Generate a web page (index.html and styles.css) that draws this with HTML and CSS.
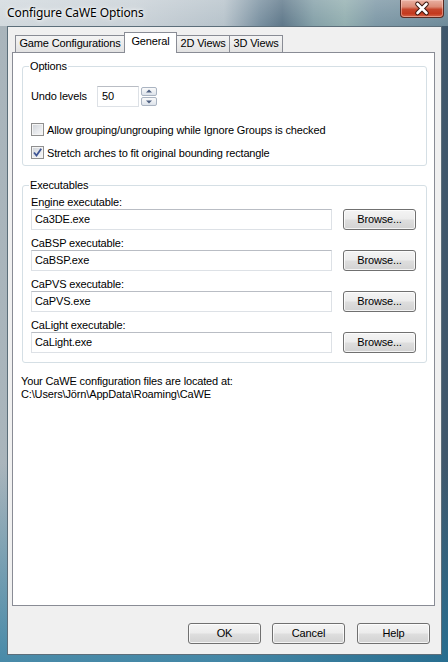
FILE: index.html
```html
<!DOCTYPE html>
<html>
<head>
<meta charset="utf-8">
<link rel="stylesheet" href="styles.css">
</head>
<body>
<div class="window">
  <div class="titlebar">
    <span class="title">Configure CaWE Options</span>
    <div class="close">
      <svg width="42" height="17" viewBox="0 0 42 17">
        <path d="M16.5 4 L25.5 13 M25.5 4 L16.5 13" stroke="#3b1710" stroke-width="4.6" stroke-linecap="round"/>
        <path d="M16.5 4 L25.5 13 M25.5 4 L16.5 13" stroke="#ffffff" stroke-width="2.6" stroke-linecap="round"/>
      </svg>
    </div>
  </div>
  <div class="client">
    <div class="tabs">
      <div class="tab first">Game Configurations</div>
      <div class="tab active">General</div>
      <div class="tab">2D Views</div>
      <div class="tab">3D Views</div>
    </div>
    <div class="panel">
      <fieldset class="group options">
        <legend>Options</legend>
        <div class="undo-row">
          <span class="undo-label">Undo levels</span>
          <div class="edit small">50</div>
          <div class="spin">
            <div class="spin-btn"><svg width="14" height="7" viewBox="0 0 14 7"><path d="M7 1.5 L10 4.5 L4 4.5 Z" fill="#4d5f80"/></svg></div>
            <div class="spin-btn"><svg width="14" height="7" viewBox="0 0 14 7"><path d="M4 2.5 L10 2.5 L7 5.5 Z" fill="#4d5f80"/></svg></div>
          </div>
        </div>
        <div class="check-row first-check">
          <span class="checkbox"></span>
          <span>Allow grouping/ungrouping while Ignore Groups is checked</span>
        </div>
        <div class="check-row">
          <span class="checkbox"><svg width="11" height="11" viewBox="0 0 11 11"><path d="M2 5.5 L4.5 8.5 L9.2 1.8" fill="none" stroke="#3f5594" stroke-width="1.8"/></svg></span>
          <span>Stretch arches to fit original bounding rectangle</span>
        </div>
      </fieldset>
      <fieldset class="group exes">
        <legend>Executables</legend>
        <div class="exe">
          <div class="exe-label">Engine executable:</div>
          <div class="exe-row"><div class="edit wide">Ca3DE.exe</div><div class="btn browse">Browse...</div></div>
        </div>
        <div class="exe">
          <div class="exe-label">CaBSP executable:</div>
          <div class="exe-row"><div class="edit wide">CaBSP.exe</div><div class="btn browse">Browse...</div></div>
        </div>
        <div class="exe">
          <div class="exe-label">CaPVS executable:</div>
          <div class="exe-row"><div class="edit wide">CaPVS.exe</div><div class="btn browse">Browse...</div></div>
        </div>
        <div class="exe">
          <div class="exe-label">CaLight executable:</div>
          <div class="exe-row"><div class="edit wide">CaLight.exe</div><div class="btn browse">Browse...</div></div>
        </div>
      </fieldset>
      <p class="info">Your CaWE configuration files are located at:<br>C:\Users\Jörn\AppData\Roaming\CaWE</p>
    </div>
    <div class="buttons">
      <div class="btn dlg">OK</div>
      <div class="btn dlg cancel">Cancel</div>
      <div class="btn dlg help">Help</div>
    </div>
  </div>
</div>
</body>
</html>
```
FILE: styles.css
```css
* { box-sizing: border-box; }
html, body { margin: 0; padding: 0; }
body {
  width: 448px;
  height: 662px;
  overflow: hidden;
  font-family: "Liberation Sans", Arial, sans-serif;
  font-size: 11px;
  letter-spacing: -0.15px;
  color: #000;
}
.window {
  width: 448px;
  height: 662px;
  display: flex;
  flex-direction: column;
  padding: 0 6px 7px 7px;
  background:
    linear-gradient(180deg, rgba(0,0,0,0) 70%, rgba(30,120,160,0.7) 100%),
    linear-gradient(90deg, #aab5bc 0%, #98a8b3 50%, #3e566a 100%);
}
.titlebar {
  height: 26px;
  margin: 0 -6px 0 -7px;
  padding: 0 4px 0 7px;
  display: flex;
  justify-content: space-between;
  align-items: flex-start;
  background:
    linear-gradient(180deg, rgba(255,255,255,0.18) 0%, rgba(255,255,255,0) 100%),
    linear-gradient(90deg, #d2d9de 0%, #c9d1d7 30%, #b7c3cb 50%, #7990a0 58%, #5f788a 63%, #84a0a8 70%, #93afb0 77%, #7d98a6 84%, #6e8a99 100%);
}
.title {
  font-family: "Noto Sans", "Liberation Sans", sans-serif;
  font-size: 12px;
  letter-spacing: -0.1px;
  line-height: 16px;
  margin-top: 5px;
  color: #000;
  text-shadow: 0 0 6px #fff, 0 0 3px #fff;
}
.close {
  width: 44px;
  height: 18px;
  border: 1px solid #5a2a22;
  border-top: none;
  border-radius: 0 0 4px 4px;
  background: linear-gradient(180deg, #e9b0a2 0%, #dc8b76 40%, #c6462c 55%, #c4391e 80%, #d5664a 100%);
  box-shadow: inset 0 0 0 1px rgba(255,220,210,0.45);
  display: flex;
  align-items: center;
  justify-content: center;
}
.close svg { display: block; }
.client {
  flex: 1;
  display: flex;
  flex-direction: column;
  background: #f0f0f0;
  border: 1px solid #5c6e7a;
  padding: 5px 6px 10px 4px;
}
.tabs {
  height: 20px;
  display: flex;
  align-items: flex-end;
  padding-left: 3px;
  position: relative;
  z-index: 2;
}
.tab {
  height: 17px;
  border: 1px solid #898c95;
  border-bottom: none;
  background: linear-gradient(180deg, #f4f4f4 0%, #ececec 50%, #e2e2e2 100%);
  display: flex;
  align-items: center;
  justify-content: center;
  line-height: 13px;
  padding-bottom: 1px;
  margin-left: -1px;
  width: 54px;
}
.tab.first { margin-left: 0; width: 110px; }
.tab.active {
  height: 21px;
  margin-bottom: -1px;
  width: 53px;
  background: #fff;
  padding-bottom: 3px;
  position: relative;
  z-index: 3;
}
.panel {
  height: 554px;
  background: #fff;
  border: 1px solid #898c95;
  padding: 7px 7px 0 8px;
}
.group {
  margin: 0 0 0 1px;
  border: 1px solid #d5dfe5;
  border-radius: 3px;
  padding: 0 10px 0 8px;
  min-width: 0;
}
.group legend {
  padding: 0 1px;
  margin-left: -2px;
  line-height: 13px;
  height: 13px;
}
.options { padding-top: 13px; padding-bottom: 4px; }
.undo-row {
  display: flex;
  align-items: flex-start;
  height: 21px;
}
.undo-label {
  width: 66px;
  line-height: 21px;
}
.edit {
  height: 21px;
  border: 1px solid #dde1e6;
  border-top-color: #b9bdc4;
  background: #fff;
  line-height: 19px;
  padding-left: 3px;
  white-space: nowrap;
}
.edit.small { width: 42px; padding-left: 4px; }
.spin {
  margin-left: 2px;
  margin-top: 1px;
  width: 16px;
  height: 19px;
  display: flex;
  flex-direction: column;
  justify-content: space-between;
}
.spin-btn {
  height: 9px;
  border: 1px solid #aab4c2;
  border-radius: 2px;
  background: linear-gradient(180deg, #fafafa 0%, #eceff3 50%, #dde3ea 100%);
  display: flex;
  align-items: center;
  justify-content: center;
}
.spin-btn svg { display: block; }
.check-row {
  height: 17px;
  display: flex;
  align-items: center;
  margin-top: 6px;
  white-space: nowrap;
}
.check-row.first-check { margin-top: 14px; }
.checkbox {
  width: 13px;
  height: 13px;
  flex: none;
  margin-right: 3px;
  border: 1px solid #8f8f8f;
  background: linear-gradient(135deg, #cdd1d6 0%, #e9ebee 60%, #f7f7f7 100%);
  box-shadow: inset 0 0 0 1px #f4f4f4;
  display: flex;
  align-items: center;
  justify-content: center;
}
.checkbox svg { display: block; }
.exes { margin-top: 13px; padding-top: 4px; padding-bottom: 9px; }
.exe + .exe { margin-top: 7px; }
.exe-label { line-height: 13px; height: 13px; white-space: nowrap; }
.exe-row { display: flex; height: 21px; }
.edit.wide { width: 301px; }
.btn {
  height: 21px;
  border: 1px solid #707070;
  border-radius: 3px;
  background: linear-gradient(180deg, #f4f4f4 0%, #ececec 48%, #dedede 52%, #d2d2d2 100%);
  box-shadow: inset 0 0 0 1px rgba(255,255,255,0.75);
  display: flex;
  align-items: center;
  justify-content: center;
  line-height: 13px;
  white-space: nowrap;
}
.browse { width: 73px; margin-left: 11px; }
.info {
  margin: 12px 0 0 0;
  line-height: 13px;
}
.buttons {
  display: flex;
  justify-content: flex-end;
  margin-top: 17px;
  padding-right: 5px;
}
.dlg { width: 73px; }
.cancel { margin-left: 11px; }
.help { margin-left: 12px; }
```
